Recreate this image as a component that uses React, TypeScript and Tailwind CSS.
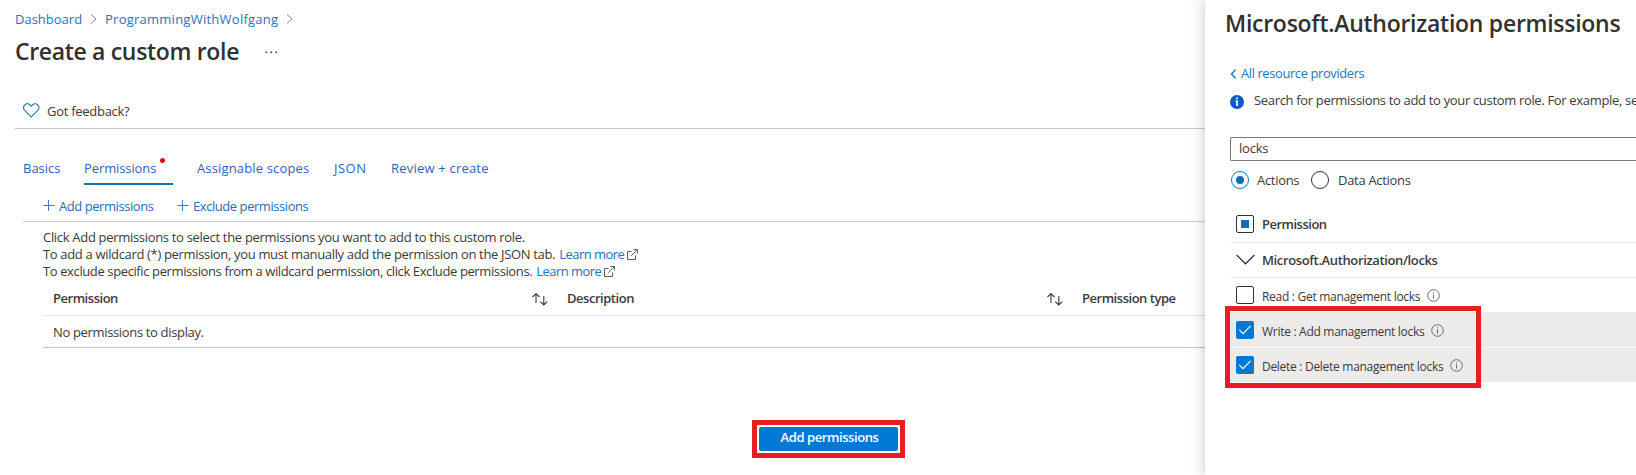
import type { ReactNode } from 'react';

const ChevronRight = ({ className }: { className: string }) => (
  <svg className={className} width="8" height="12" viewBox="0 0 8 12" fill="none" stroke="#8a8886" strokeWidth="1">
    <path d="M1 1.5 6 6 1 10.5" />
  </svg>
);

const Plus = () => (
  <svg width="12" height="12" viewBox="0 0 12 12" fill="none" stroke="#3b82c4" strokeWidth="1">
    <path d="M.5 5.5h11M5.500 0v11" />
  </svg>
);

const SortIcon = () => (
  <svg width="18" height="14" viewBox="0 0 18 14" fill="none" stroke="#3b3a39" strokeWidth="1.1">
    <path d="M5 10V.8M1.500 4 5 .7 8.500 4M12.800 3v8.800M9.300 8.600l3.500 3.300 3.500-3.300" />
  </svg>
);

const ExternalIcon = () => (
  <svg className="ml-[3px] shrink-0" width="11" height="11" viewBox="0 0 11 11" fill="none" stroke="#5c5c5c" strokeWidth="1">
    <path d="M4.500 2.500H.5v8h8V6.500M6.500.5h4v4M10.300.7 4.200 6.800" />
  </svg>
);

const InfoIcon = () => (
  <svg className="shrink-0" width="13" height="13" viewBox="0 0 13 13" fill="none" stroke="#6b6967" strokeWidth="1">
    <circle cx="6.5" cy="6.5" r="5.8" />
    <path d="M6.5 5.5v4.2M6.5 3.2v1.2" />
  </svg>
);

const Checkbox = ({ state }: { state: 'on' | 'off' | 'mixed' }) => (
  <span
    className={
      state === 'on'
        ? 'flex size-[18px] shrink-0 items-center justify-center rounded-[2px] bg-[#0078d4]'
        : 'flex size-[18px] shrink-0 items-center justify-center rounded-[2px] border border-[#323130] bg-white'
    }
  >
    {state === 'mixed' && <span className="size-2 bg-[#0f6cbd]" />}
    {state === 'on' && (
      <svg width="14" height="12" viewBox="0 0 14 12" fill="none" stroke="#fff" strokeWidth="1.1">
        <path d="M1.2 5.8 5 9.6 12.6 1.9" />
      </svg>
    )}
  </span>
);

const Tab = ({ className, children }: { className: string; children: ReactNode }) => (
  <div className={`h-[27px] shrink-0 text-[#2f63b8] ${className}`}>{children}</div>
);

const Learn = () => <span className="ml-1 tracking-[-0.53px] text-[#2472b8]">Learn more</span>;

const PermissionRow = ({ checked, label, className }: { checked: boolean; label: string; className: string }) => (
  <div className={`flex pl-1.5 text-[12px] ${className}`}>
    <Checkbox state={checked ? 'on' : 'off'} />
    <span className="mt-[2px] ml-2 h-[18px] leading-[18px] tracking-[-0.29px]">{label}</span>
    <span className="mt-[3px] ml-[7px]">
      <InfoIcon />
    </span>
  </div>
);

export default function App() {
  return (
    <div className="relative flex h-[475px] w-[1636px] overflow-hidden bg-white font-['Open_Sans',sans-serif] text-[13px] leading-5 whitespace-nowrap text-[#3b3a39]">
      <main className="flex w-[1205px] shrink-0 flex-col">
        <nav className="flex h-[26px] items-start pt-[9px] pl-[15px] text-[#2b74b8]">
          <span className="w-[75px]">Dashboard</span>
          <ChevronRight className="mt-1" />
          <span className="ml-[7px] w-[174px] tracking-[0.25px]">ProgrammingWithWolfgang</span>
          <ChevronRight className="mt-1 ml-[7px]" />
        </nav>
        <header className="mt-[9px] flex h-8 pl-[15px]">
          <h1 className="w-[250px] text-[23px] leading-8 font-semibold tracking-[-0.33px] text-[#323130]">
            Create a custom role
          </h1>
          <svg className="mt-4" width="14" height="3" viewBox="0 0 14 3" fill="#3b3a39">
            <rect x="0.5" y="0.5" width="1.6" height="1.6" />
            <rect x="5.5" y="0.5" width="1.6" height="1.6" />
            <rect x="10.5" y="0.5" width="1.6" height="1.6" />
          </svg>
        </header>
        <div className="mt-[34px] ml-[15px] flex h-7 border-b border-[#c8c8c8] pl-2">
          <svg className="mt-[2px]" width="17" height="15" viewBox="0 0 17 15" fill="none" stroke="#2b74a8" strokeWidth="1.1">
            <path d="M8.2 13.9 1.7 7.4C.2 5.8.3 3.5 1.7 2 3.200.5 5.500.5 7 2l1.200 1.200L9.400 2c1.500-1.500 3.800-1.500 5.300 0 1.400 1.500 1.500 3.800 0 5.400z" />
          </svg>
          <span className="ml-[7px] tracking-[-0.28px]">Got feedback?</span>
        </div>
        <div className="mt-[29px] flex pl-[23px]">
          <Tab className="w-[61px]">Basics</Tab>
          <Tab className="mr-6 flex w-[89px] border-b-2 border-[#1677a6]">
            <span className="w-[73px] tracking-[-0.1px]">Permissions</span>
            <span className="ml-[3px] size-[5px] rounded-full bg-[#e00b1c]" />
          </Tab>
          <Tab className="w-[137px] tracking-[0.15px]">Assignable scopes</Tab>
          <Tab className="w-[57px] tracking-[0.5px]">JSON</Tab>
          <Tab className="w-[110px] tracking-[0.2px]">Review + create</Tab>
        </div>
        <div className="ml-[23px] flex h-[37px] border-b border-[#c8c8c8] pt-[11px] pl-5 tracking-[-0.44px] text-[#2b6cb5]">
          <span className="mt-1 flex h-3 w-4">
            <Plus />
          </span>
          <span className="w-[118px]">Add permissions</span>
          <span className="mt-1 flex h-3 w-4">
            <Plus />
          </span>
          <span>Exclude permissions</span>
        </div>
        <div className="mt-[7px] ml-[43px] flex flex-col leading-[17px]">
          <div className="tracking-[-0.31px]">
            Click Add permissions to select the permissions you want to add to this custom role.
          </div>
          <div className="flex items-center">
            <span className="tracking-[-0.335px]">
              To add a wildcard (*) permission, you must manually add the permission on the JSON tab.
            </span>
            <Learn />
            <ExternalIcon />
          </div>
          <div className="flex items-center">
            <span className="tracking-[-0.385px]">
              To exclude specific permissions from a wildcard permission, click Exclude permissions.
            </span>
            <Learn />
            <ExternalIcon />
          </div>
        </div>
        <div className="mt-2 ml-[43px] flex h-[28px] border-b border-[#e4e4e4] pl-[10px] font-semibold tracking-[-0.47px]">
          <span className="w-[478px]">Permission</span>
          <span className="mt-[5px] w-9">
            <SortIcon />
          </span>
          <span className="w-[479px]">Description</span>
          <span className="mt-[5px] w-9">
            <SortIcon />
          </span>
          <span>Permission type</span>
        </div>
        <div className="ml-[43px] h-8 border-b border-[#c4c6c6] pt-[6px] pl-[10px] tracking-[-0.34px]">
          No permissions to display.
        </div>
        <div className="mt-[72px] ml-[752px] h-[38px] w-[153px] border-5 border-[#e81c24] p-[2px]">
          <button className="flex h-6 w-[139px] justify-center rounded-[2px] bg-[#0078d4] pl-[2px] font-semibold tracking-[-0.42px] text-white">
            <span>Add permissions</span>
          </button>
        </div>
      </main>

      <aside className="flex w-[431px] shrink-0 flex-col bg-white pl-[25px] shadow-[0_0_14px_rgba(0,0,0,0.24)]">
        <h2 className="-ml-[5px] pt-[7px] text-[23px] leading-8 font-semibold tracking-[-0.27px] text-[#323130]">
          Microsoft.Authorization permissions
        </h2>
        <div className="mt-6 flex text-[#2b74b8]">
          <svg className="mt-[6px]" width="7" height="10" viewBox="0 0 7 10" fill="none" stroke="currentColor" strokeWidth="1.5">
            <path d="M5.500.8 1.500 5l4 4.200" />
          </svg>
          <span className="ml-1 tracking-[-0.42px]">All resource providers</span>
        </div>
        <div className="mt-[7px] flex">
          <svg className="mt-[5px] shrink-0" width="14" height="14" viewBox="0 0 14 14">
            <circle cx="7" cy="7" r="7" fill="#0f5ac8" />
            <path d="M5.500 5.500H8V11H6.200V6.700H5.500zM6.200 2.500H8v1.800H6.200z" fill="#fff" />
          </svg>
          <span className="ml-[10px] tracking-[-0.33px]">
            Search for permissions to add to your custom role. For example, se
          </span>
        </div>
        <div className="mt-[27px] h-6 rounded-l-[2px] border border-r-0 border-[#7a7877] pl-2 tracking-[-0.2px]">locks</div>
        <div className="mt-[9px] flex h-5 tracking-[-0.3px]">
          <span className="mt-px ml-px flex size-[18px] items-center justify-center rounded-full border border-[#0078d4]">
            <span className="size-2 rounded-full bg-[#0f6cbd]" />
          </span>
          <span className="ml-2 w-[54px]">Actions</span>
          <span className="mt-px size-[18px] rounded-full border border-[#323130]" />
          <span className="ml-[9px]">Data Actions</span>
        </div>
        <div className="mt-6 flex h-[29px] border-b border-[#ebebeb] pl-1.5 font-semibold">
          <span className="mt-px">
            <Checkbox state="mixed" />
          </span>
          <span className="ml-2 tracking-[-0.5px]">Permission</span>
        </div>
        <div className="flex h-[35px] border-b border-[#ebebeb] pt-[7px] pl-1.5 font-semibold">
          <svg className="mt-1" width="19" height="12" viewBox="0 0 19 12" fill="none" stroke="#323130" strokeWidth="1.2">
            <path d="M.6 1 9.500 9.800 18.400 1" />
          </svg>
          <span className="ml-[7px] tracking-[-0.37px]">Microsoft.Authorization/locks</span>
        </div>
        <PermissionRow checked={false} label="Read : Get management locks" className="h-[34px] pt-2" />
        <PermissionRow checked label="Write : Add management locks" className="h-[35px] bg-[#edebe9] pt-[9px]" />
        <PermissionRow
          checked
          label="Delete : Delete management locks"
          className="h-[35px] border-t border-[#faf9f8] bg-[#edebe9] pt-[8px]"
        />
      </aside>
      <div className="pointer-events-none absolute top-[306px] left-[1225px] h-[82px] w-[256px] border-5 border-[#e81c24]" />
    </div>
  );
}
